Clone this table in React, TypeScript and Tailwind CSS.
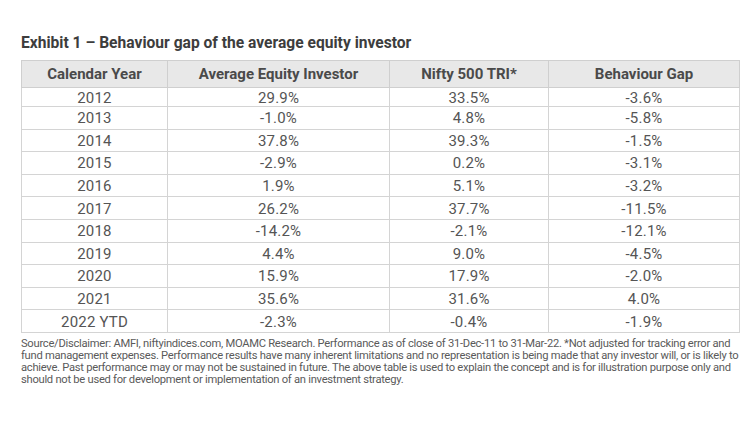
const rows: [string, string, string, string][] = [
  ["2012", "29.9%", "33.5%", "-3.6%"],
  ["2013", "-1.0%", "4.8%", "-5.8%"],
  ["2014", "37.8%", "39.3%", "-1.5%"],
  ["2015", "-2.9%", "0.2%", "-3.1%"],
  ["2016", "1.9%", "5.1%", "-3.2%"],
  ["2017", "26.2%", "37.7%", "-11.5%"],
  ["2018", "-14.2%", "-2.1%", "-12.1%"],
  ["2019", "4.4%", "9.0%", "-4.5%"],
  ["2020", "15.9%", "17.9%", "-2.0%"],
  ["2021", "35.6%", "31.6%", "4.0%"],
  ["2022 YTD", "-2.3%", "-0.4%", "-1.9%"],
];

const headers = ["Calendar Year", "Average Equity Investor", "Nifty 500 TRI*", "Behaviour Gap"];

export default function App() {
  return (
    <div
      className="w-[750px] h-[424px] bg-white px-[21px] pt-[33px] text-[#555]"
      style={{ fontFamily: 'Roboto, "Liberation Sans", sans-serif' }}
    >
      <h1 className="text-[15.6px] font-bold text-[#3d3d3d] leading-[20px] h-[27px]">
        Exhibit 1 – Behaviour gap of the average equity investor
      </h1>
      <table className="w-[718px] border-collapse table-fixed">
        <colgroup>
          <col className="w-[146px]" />
          <col className="w-[222px]" />
          <col className="w-[159px]" />
          <col className="w-[191px]" />
        </colgroup>
        <thead>
          <tr className="h-[27px] bg-[#e8e8e8]">
            {headers.map((h) => (
              <th
                key={h}
                className="border border-[#cfcfcf] text-[15px] font-bold text-[#4a4a4a] text-center leading-none p-0"
              >
                {h}
              </th>
            ))}
          </tr>
        </thead>
        <tbody>
          {rows.map((r, i) => (
            <tr key={r[0]} className={i === 0 ? "h-[19px]" : "h-[22.6px]"}>
              {r.map((c, j) => (
                <td
                  key={j}
                  className="border border-[#d4d4d4] text-[15px] text-center leading-none p-0 pt-[2px] tracking-[0.2px]"
                >
                  {c}
                </td>
              ))}
            </tr>
          ))}
        </tbody>
      </table>
      <p className="mt-[5px] text-[11.2px] leading-[12px] text-[#5a5a5a] whitespace-nowrap tracking-[-0.27px]">
        Source/Disclaimer: AMFI, niftyindices.com, MOAMC Research. Performance as of close of 31-Dec-11 to 31-Mar-22. *Not adjusted for tracking error and
        <br />
        fund management expenses. Performance results have many inherent limitations and no representation is being made that any investor will, or is likely to
        <br />
        achieve. Past performance may or may not be sustained in future. The above table is used to explain the concept and is for illustration purpose only and
        <br />
        should not be used for development or implementation of an investment strategy.
      </p>
    </div>
  );
}
